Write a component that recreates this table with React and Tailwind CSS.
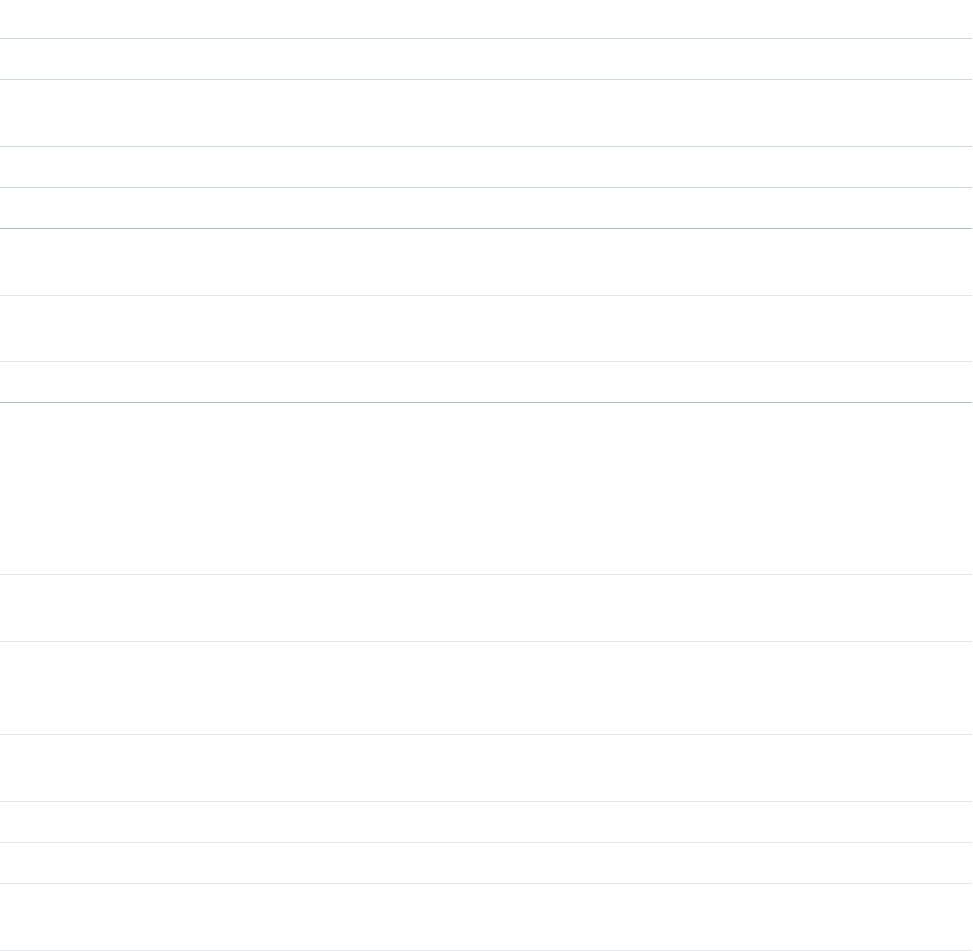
export default function App() {
  return (
    <div className="w-[972px] min-h-[951px] bg-white flex flex-col" style={{ fontFamily: '"Liberation Sans", Arial, sans-serif' }}>
      <div className="h-[39px] border-b border-[#cfd8dc]" />
      <div className="h-[41px] border-b border-[#cfd8dc]" />
      <div className="h-[67px] border-b border-[#cfd8dc]" />
      <div className="h-[41px] border-b border-[#cfd8dc]" />
      <div className="h-[41px] border-b border-[#b0bec5]" />
      <div className="h-[67px] border-b border-[#e3e7e9]" />
      <div className="h-[66px] border-b border-[#e3e7e9]" />
      <div className="h-[41px] border-b border-[#b0bec5]" />
      <div className="h-[172px] border-b border-[#e3e7e9]" />
      <div className="h-[67px] border-b border-[#e3e7e9]" />
      <div className="h-[93px] border-b border-[#e3e7e9]" />
      <div className="h-[67px] border-b border-[#e3e7e9]" />
      <div className="h-[41px] border-b border-[#e3e7e9]" />
      <div className="h-[41px] border-b border-[#e3e7e9]" />
      <div className="h-[67px] border-b border-[#e3e7e9]" />
    </div>
  );
}
